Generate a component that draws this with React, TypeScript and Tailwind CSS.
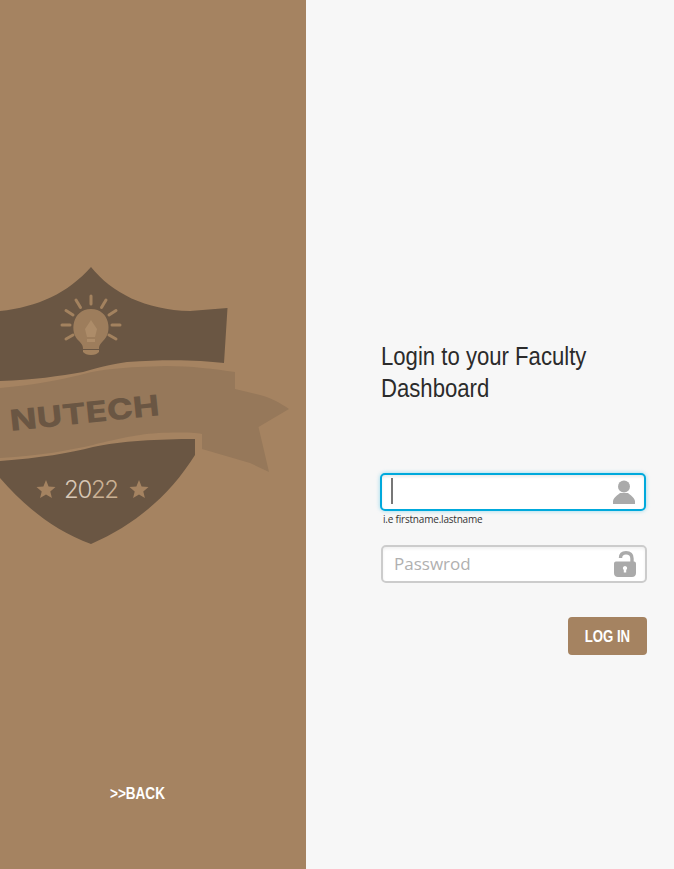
const sans = "font-['Liberation_Sans',Arial,sans-serif]";

function Star({ cx, cy, r }: { cx: number; cy: number; r: number }) {
  const pts = Array.from({ length: 10 }, (_, i) => {
    const a = (Math.PI / 5) * i - Math.PI / 2;
    const d = i % 2 ? r * 0.45 : r;
    return `${(cx + d * Math.cos(a)).toFixed(1)},${(cy + d * Math.sin(a)).toFixed(1)}`;
  }).join(" ");
  return <polygon points={pts} fill="#a58361" />;
}

function Badge() {
  const rays: [number, number, number, number][] = [
    [62, 70, 70, 70],
    [66, 84, 73, 80],
    [66, 55.5, 73, 60],
    [76, 45, 80.5, 52.5],
    [91, 41, 91, 49],
    [106, 45, 101.5, 52.5],
    [116, 55.5, 109, 60],
    [112, 70, 120, 70],
    [116, 84, 109, 80],
  ];
  return (
    <svg width="306" height="300" viewBox="0 0 306 300" className="block">
      <path
        d="M0 56 C38 52 68 38 91 12 C112 38 145 55 190 56 L227.5 53 L224 108 C200 105 167 104 127 107 C105 110 95 114 83 117 C60 121 33 125 0 126 Z"
        fill="#6a5643"
      />
      <path
        d="M0 206 C40 203 70 198 93 192 C120 186 160 184 195 184 L195 200 C170 240 135 270 91 289 C55 276 25 252 0 223 Z"
        fill="#6a5643"
      />
      <path
        d="M0 133 C33 130 60 125 80 120 C100 114 125 112 167 111 C190 111 215 114 235 117 L235 134 L260 140 C272 143 282 149 289 154 L258.5 172 L269 217 L250 208 L202 194 L202 179 C190 177 160 177 140 180 C120 183 100 188 93 190 C70 195 40 201 0 203 Z"
        fill="#96785a"
      />
      <g stroke="#a3825f" strokeWidth="3" strokeLinecap="round">
        {rays.map(([a, b, c, d], i) => (
          <line key={i} x1={a} y1={b} x2={c} y2={d} />
        ))}
      </g>
      <path
        d="M91 54 C72 54 69 78 79 86 C83 90 83 92 83 94 L99 94 C99 92 99 90 103 86 C113 78 110 54 91 54 Z"
        fill="#9d7d5c"
      />
      <path d="M83 95 H99 V97 C97 99 95 100 91 100 C87 100 85 99 83 97 Z" fill="#a3825f" />
      <path d="M91 65 L97 74 L95 82 H87 L85 74 Z M87 84 H95 V87 H87 Z" fill="#ad8c69" />
      <text
        x="11"
        y="176"
        transform="rotate(-6 11 176)"
        fontFamily="Inter, 'Liberation Sans', sans-serif"
        fontWeight="800"
        fontSize="29"
        textLength="150"
        lengthAdjust="spacingAndGlyphs"
        fill="#6a5643"
      >
        NUTECH
      </text>
      <Star cx={46} cy={235} r={10} />
      <Star cx={139} cy={235} r={10} />
      <text x="64" y="242.500" fontFamily="Inter, 'Liberation Sans', sans-serif" fontWeight="300" fontSize="24" textLength="55" fill="#d8c8b6">
        20<tspan fill="#c9b094">22</tspan>
      </text>
    </svg>
  );
}

function UserIcon() {
  return (
    <svg width="24" height="24" viewBox="0 0 24 24">
      <circle cx="12" cy="6.500" r="6" fill="#aaaaaa" />
      <path d="M1 24 L1 21 C2 17 6 15 8 13 H16 C18 15 22 17 23 21 L23 24 Z" fill="#aaaaaa" />
    </svg>
  );
}

function LockIcon() {
  return (
    <svg width="24" height="26" viewBox="0 0 24 26">
      <path d="M19 12 V7.500 C19 3.500 16.500 1.700 13 1.700 C9.500 1.700 7.500 3.500 7.500 7" fill="none" stroke="#aaaaaa" strokeWidth="3.400" />
      <path
        fillRule="evenodd"
        d="M3 10.500 H21 C22.500 10.500 23 11.500 23 13 V22 C23 24.500 21.500 26 19 26 H5 C2.500 26 1 24.500 1 22 V13 C1 11.500 1.500 10.500 3 10.500 Z M12 15 A2.200 2.200 0 0 0 10.800 19 V21.500 H13.200 V19 A2.200 2.200 0 0 0 12 15 Z"
        fill="#aaaaaa"
      />
    </svg>
  );
}

export default function App() {
  return (
    <div className="flex h-[869px] w-[674px] overflow-hidden bg-[#f7f7f7]">
      <aside className="flex w-[306px] shrink-0 flex-col items-center bg-[#a58361] pt-[255px]">
        <Badge />
        <a className={`mt-[229px] -translate-x-[16px] scale-x-[.82] text-[16.5px] leading-[18px] font-bold text-white ${sans}`}>
          &gt;&gt;BACK
        </a>
      </aside>
      <main className="flex flex-1 flex-col pt-[340px] pr-[27px] pl-[75px]">
        <h1 className={`w-[270px] origin-left scale-x-[.885] text-[25px] leading-[32px] font-normal text-[#2b2b2b] ${sans}`}>
          Login to your Faculty Dashboard
        </h1>
        <div className="relative mt-[69px] -ml-[1px] h-[38px] w-[266px] rounded-[5px] border-2 border-[#00a9dc] bg-white shadow-[0_0_4px_rgba(0,169,220,0.4),inset_0_2px_3px_rgba(0,0,0,0.08)]">
          <span className="absolute top-[3px] left-[9px] h-[26px] w-[2px] bg-[#777777]" />
          <span className="absolute top-[5px] right-[8px]">
            <UserIcon />
          </span>
        </div>
        <p className="mt-[1px] ml-[2px] font-['Open_Sans',sans-serif] text-[10px] leading-[14px] tracking-[-0.2px] text-[#333333]">
          i.e firstname.lastname
        </p>
        <div className="relative mt-[19px] flex h-[38px] w-[266px] items-center rounded-[5px] border-2 border-[#cccccc] bg-white pl-[11px] font-['Open_Sans',sans-serif] text-[17px] text-[#b0b0b0] shadow-[inset_0_2px_3px_rgba(0,0,0,0.06)]">
          Passwrod
          <span className="absolute top-[4px] right-[8px]">
            <LockIcon />
          </span>
        </div>
        <div className="mt-[34px] flex w-[266px] justify-end">
          <button className={`h-[38px] w-[79px] rounded-[4px] bg-[#a58361] text-[16.5px] font-bold text-white ${sans}`}>
            <span className="inline-block scale-x-[.8]">LOG IN</span>
          </button>
        </div>
      </main>
    </div>
  );
}
